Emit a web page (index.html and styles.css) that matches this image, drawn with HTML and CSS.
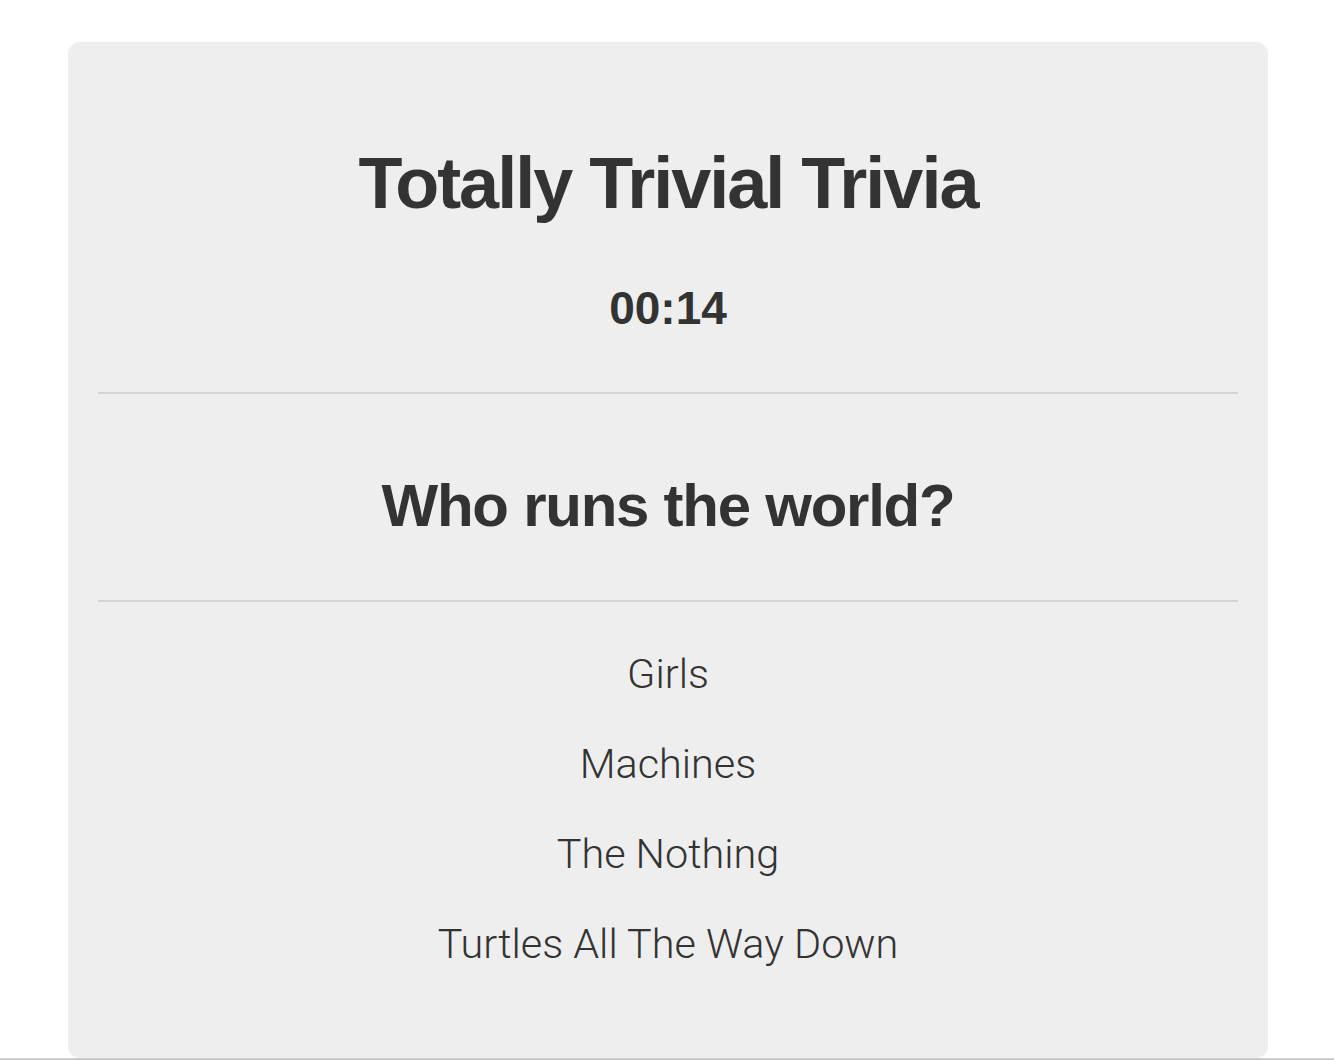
FILE: index.html
```html
<!DOCTYPE html>
<html lang="en">
<head>
<meta charset="utf-8">
<title>Totally Trivial Trivia</title>
<link rel="stylesheet" href="styles.css">
</head>
<body>
<div class="page">
  <div class="jumbotron">
    <h1 class="title">Totally Trivial Trivia</h1>
    <div class="timer">00:14</div>
    <hr class="rule">
    <h2 class="question">Who runs the world?</h2>
    <hr class="rule rule-second">
    <ul class="answers">
      <li class="answer">Girls</li>
      <li class="answer">Machines</li>
      <li class="answer">The Nothing</li>
      <li class="answer">Turtles All The Way Down</li>
    </ul>
  </div>
  <div class="bottom-line"></div>
</div>
</body>
</html>
```

FILE: styles.css
```css
html, body {
  margin: 0;
  padding: 0;
  background: #fff;
}

body {
  font-family: "Liberation Sans", Arial, sans-serif;
  color: #333;
}

.page {
  padding-top: 42px;
  display: flex;
  flex-direction: column;
  align-items: center;
}

.jumbotron {
  width: 1200px;
  box-sizing: border-box;
  background: #eeeeee;
  border-radius: 12px;
  padding: 0 30px 69px;
  margin-left: 2px;
  text-align: center;
}

.title {
  margin: 101px 0 0;
  font-size: 72px;
  line-height: 80px;
  font-weight: bold;
  letter-spacing: -2px;
}

.timer {
  margin-top: 59px;
  font-size: 46px;
  line-height: 52px;
  font-weight: bold;
}

.rule {
  margin: 58px 0 0;
  border: 0;
  height: 2px;
  background: #d6d6d6;
}

.question {
  margin: 78px 0 0;
  font-size: 60px;
  line-height: 68px;
  font-weight: bold;
  letter-spacing: -1.25px;
}

.rule-second {
  margin-top: 60px;
}

.answers {
  list-style: none;
  margin: 27px 0 0;
  padding: 0;
}

.answer {
  font-family: Roboto, "Liberation Sans", sans-serif;
  font-weight: 300;
  font-size: 41.4px;
  line-height: 90px;
}

.bottom-line {
  align-self: stretch;
  height: 3px;
  background: linear-gradient(#d4d4d4, #b9b9b9);
}
```
